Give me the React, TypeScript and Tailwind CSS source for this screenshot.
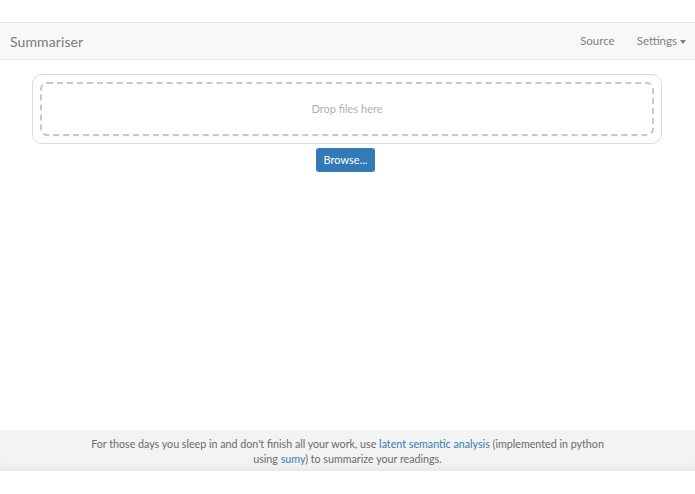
export default function App() {
  return (
    <div
      className="flex h-[494px] w-[695px] flex-col bg-white text-[#777]"
      style={{ fontFamily: "Lato, 'Open Sans', sans-serif" }}
    >
      <div className="h-[22px]" />
      <nav className="flex h-[38px] items-center justify-between border-y border-[#e7e7e7] bg-[#f8f8f8] pl-[10px] pr-[9px]">
        <span className="text-[14px] tracking-[0.1px] text-[#7a7a7a]">Summariser</span>
        <div className="flex items-center gap-[22px] text-[11.5px] text-[#808080]">
          <a>Source</a>
          <a className="flex items-center gap-[3px]">
            Settings
            <svg width="6" height="4" viewBox="0 0 6 4" className="mt-[1px]">
              <path d="M0 0h6L3 4z" fill="#808080" />
            </svg>
          </a>
        </div>
      </nav>

      <main className="ml-[32px] flex w-[630px] flex-col items-center pt-[14px]">
        <div className="w-full rounded-[10px] border border-[#dcdcdc] p-[7px]">
          <div className="flex h-[54px] items-center justify-center rounded-[7px] border-2 border-dashed border-[#c8c8c8] text-[11px] text-[#b0b0b0]">
            Drop files here
          </div>
        </div>
        <button className="mr-[3px] mt-[4px] h-[24px] w-[59px] rounded-[3px] bg-[#337ab7] text-[11px] text-white">
          Browse...
        </button>
      </main>

      <div className="flex-1" />

      <footer className="mb-[23px] flex h-[41px] flex-col items-center justify-center bg-[#f3f3f3] text-center text-[10.7px] leading-[15px] text-[#6a6a6a] shadow-[inset_0_-10px_12px_-10px_rgba(0,0,0,0.08)]">
        <p>
          For those days you sleep in and don't finish all your work, use{" "}
          <a className="text-[#337ab7]">latent semantic analysis</a> (implemented in python
        </p>
        <p>
          using <a className="text-[#337ab7]">sumy</a>) to summarize your readings.
        </p>
      </footer>
    </div>
  );
}
